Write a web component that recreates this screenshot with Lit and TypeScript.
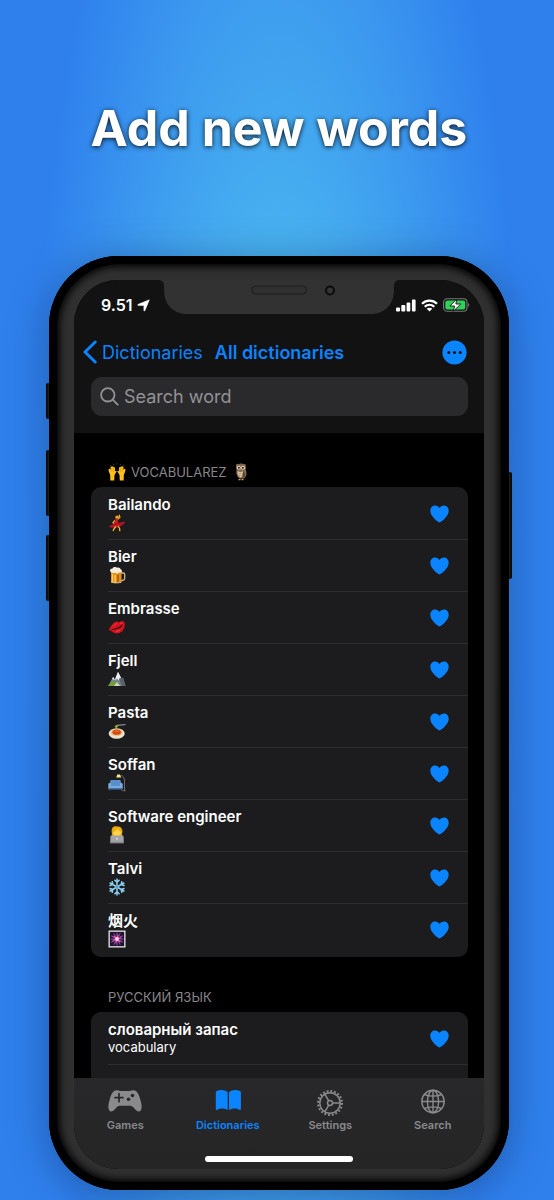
import { LitElement, html, css, svg, type TemplateResult } from "lit";
import { customElement, property } from "lit/decorators.js";
import { classMap } from "lit/directives/class-map.js";

interface Word {
  term: string;
  emoji?: string;
  meaning?: string;
}

const emojis: Record<string, TemplateResult> = {
  hands: svg`
    <g fill="#fcc21b"><path d="M1 9c-.6-1.600-.6-3 .1-3.200s1 .6 1.400 1.300L2.600 4c0-.9 1.200-.9 1.300 0l.5-.6c.4-.5 1 0 1 .6L6 4.300c.6-.4 1 0 1 .8l-.1 3.300.7-.6c.6-.5 1.200.2.900.9L6.500 12l-.3 5.500H2.300L2.200 12z"/>
    <path d="M17 9c.6-1.600.6-3-.1-3.200s-1 .6-1.400 1.300L15.400 4c0-.9-1.200-.9-1.300 0l-.5-.6c-.4-.5-1 0-1 .6l-.6.300c-.6-.4-1 0-1 .8l.1 3.300-.7-.6c-.6-.5-1.200.2-.9.900L11.500 12l.3 5.500h3.900l.1-5.500z"/></g>
    <path d="M2 2l.6.800M5.500.8l.2 1M9 .4v1M12.500.8l-.2 1M16 2l-.6.800" stroke="#6d7075" stroke-width=".7"/>
    <path d="M3.800 5v4M5.400 5v4M14.200 5v4M12.600 5v4" stroke="#d9930c" stroke-width=".5"/>`,
  owl: svg`
    <path d="M4 3c0-2 1-2.600 2-1.800 2-.8 4-.8 6 0 1.200-.8 2 0 1.700 1.800.5 2 .2 3 0 4 1.500 3 1 6.500-1.700 8.500H7.500C4.500 13.500 3.800 9.500 4.600 7 4 5.500 4 4.500 4 3z" fill="#856850"/>
    <path d="M5.500 8c2 1.500 4 1.300 5.500.3 0 3-.4 5-2.500 6.500C6.500 13.500 5 11 5.500 8z" fill="#d5c2a7"/>
    <path d="M11.500 8c2 2 1.800 5 .3 7.500C10.300 13 10.500 10 11.500 8z" fill="#5a4332"/>
    <circle cx="6.800" cy="4.700" r="1.900" fill="#eee0c8"/><circle cx="11" cy="4.700" r="1.900" fill="#eee0c8"/>
    <circle cx="6.900" cy="4.700" r="1" fill="#1f1712"/><circle cx="10.900" cy="4.700" r="1" fill="#1f1712"/>
    <path d="M8.300 5.500h1.200l-.6 1.800z" fill="#e0ac48"/><path d="M6.500 16h2v1.300h-2zM9.500 16h2v1.300h-2z" fill="#d8a048"/>
    <path d="M6.500 10.200l1 .7 1-.7 1 .7M6.700 12l1 .7 1-.7" fill="none" stroke="#8d6e52" stroke-width=".5"/>`,
  dancer: svg`
    <circle cx="9" cy="3" r="1.800" fill="#f6b81e"/><path d="M7.300 3C7 1 9.500.3 10.500 1.800L8.500 2z" fill="#3b2417"/>
    <path d="M9.500 5.500 12 3.200 11 .8M7.500 6 5 8.500l1.500 1.500" fill="none" stroke="#f6b81e" stroke-width="1.200"/>
    <path d="M7.200 4.800h3l-.2 4c2.500.5 5-1.800 7-1-1 2.500-3 4.200-6 4.500l-2 1.500c-3-1-6.500.5-8-1.300 2-1.700 4-1.500 5.500-3.700z" fill="#c9162b"/>
    <path d="M3 12c2-1 4-1 6-2.500M9.500 9.500c2 1 4.500.5 6-.6" stroke="#80101f" stroke-width=".7" fill="none"/>
    <path d="M7.800 12.500 6 14.800 5 17M10 12l1.600 2.500.2 2.800" fill="none" stroke="#f6b81e" stroke-width="1.300"/>`,
  beer: svg`
    <path d="M13 7h2.400c1 0 1.300.6 1.300 1.300v3.900c0 1.800-1.500 2.300-3.700 2.300" fill="none" stroke="#c9b594" stroke-width="1.300"/>
    <path d="M3 5h10.500v11c0 1.400-10.500 1.400-10.500 0z" fill="#e58f16"/><path d="M4.500 8v8M7.200 9v8" stroke="#f7ca50" stroke-width="1.400"/><path d="M10 8.500v8" stroke="#a95a13" stroke-width="1.600"/>
    <path d="M2.300 5.400C1.500 3.600 3 2.400 4.500 2.500 5.500.7 8 .8 9 1.800c1.800-.6 3.300.3 3.500 1.500 1.600.3 1.800 2 1 3-1.200 1-2 0-3 .3-.6 1.900-2.200 1.700-2.600.2-2 .5-4.600.5-5.600-1.400z" fill="#f5eedd"/>
    <path d="M3 16c2 1.200 8.500 1.200 10.500 0" fill="none" stroke="#d7c8aa" stroke-width=".9"/>`,
  kiss: svg`
    <path d="M.8 12C2.500 8 5.500 4 9 3.200c.8.500 1.200 1.100 1.700 1.300 1.500-1 3.800-1.700 5-1 1.500 1.200 1.600 5-.4 8.200-2 3-5.300 4-7.800 3.600C5 14.800 4 12.900.8 12z" fill="#d4141f"/>
    <path d="M2.500 11.600c2.500-.8 5-.6 7-2 2-.8 3.500-2.600 5.800-3.400-1.600 2.300-3 4-5.300 4.600-2.400.8-4.600 1.200-7.500.8z" fill="#33090b"/>
    <path d="M5 8.500 8.500 5M12 5.500l2.500-.8M8 13.500l4-1.300" stroke="#f0484d" stroke-width=".8"/>`,
  mountain: svg`
    <path d="M.3 16 5 7l2 2.500L10 2l3.500 7L15 7.500l2.700 8.500z" fill="#77828a"/><path d="M7.200 8.800 10 1.800l3.500 6.800-1.800-.8-1 3-1.600-2.500-1.300 2z" fill="#eef2f3"/>
    <path d="M4 9l1.200-2.300L7 10l-1.500-.3z" fill="#d9e0e2"/><path d="M0 16 4.200 10l2 3 2-2 3 3 .5 2z" fill="#6f9c3c"/><path d="M6 16l3-4 3 4z" fill="#d7cfc0"/>
    <path d="M11 9l3 7h3.600L15 7.700z" fill="#56616a"/>`,
  pasta: svg`
    <ellipse cx="8.700" cy="11.500" rx="8" ry="5.200" fill="#ece4d2"/><ellipse cx="8.700" cy="10.700" rx="6.400" ry="3.500" fill="#e0d2b2"/>
    <ellipse cx="8.700" cy="10.300" rx="5.200" ry="3.200" fill="#efb947"/><ellipse cx="8.700" cy="10.200" rx="4.200" ry="2.600" fill="#d8481c"/>
    <path d="M6.500 9.500c1.500-1.500 3 .7 4.500-.7" stroke="#f1832e" fill="none"/><path d="M7.500 5.800C6 4.500 7 3 8.500 3.300c.2-1 1.700-1 2 .1L9 6z" fill="#84ad36"/>
    <path d="M10 3.300 17.500 2.600" stroke="#a0a7ad" stroke-width="1"/>`,
  sofa: svg`
    <path d="M2 8c0-1.500 1-2 2-2h7c1 0 2 .5 2 2v4H2z" fill="#5b8fcb"/><path d="M.3 10.200c0-1.500 2.400-1.500 2.700 0V12h9v-1.800c.3-1.500 2.500-1.500 2.700 0V15H.3z" fill="#79acdf"/>
    <path d="M.8 14h13.500v1.600H.8z" fill="#416f9f"/><path d="M1.500 15.500v1M13.500 15.500v1" stroke="#82552f"/>
    <path d="M11 2.200c4-2 5.500 2 5.500 5v9.300M14.500 16.700h3.300" fill="none" stroke="#777b72" stroke-width=".9"/><path d="M8.200 3.500 9.300.6h2.500l1.400 2.900z" fill="#f9e68c"/>`,
  coder: svg`
    <path d="M4 8C2.500 1.500 6-.2 9 .5c4-.7 6.500 2.800 5 7.500l.3 3H3.800z" fill="#e8a60d"/><circle cx="9" cy="6.300" r="4" fill="#ffd34d"/>
    <path d="M5 6c2-.5 4-2 4.500-3.500 1 2 2.300 2.900 3.600 3.300V3L9 1 5.300 3z" fill="#f0ad10"/><path d="M2.500 12c1.500-2 11.500-2 13 0v5h-13z" fill="#6f8290"/>
    <path d="M3.300 9.600h11.400c.5 0 .8.300.8.800V17h-13v-6.600c0-.5.300-.8.800-.8z" fill="#a4a5a8"/><path d="M2.200 15.800h13.600v1.600H2.200z" fill="#85868a"/><circle cx="9" cy="12.700" r=".9" fill="#e8e8e9"/>`,
  snow: svg`
    <g fill="none" stroke="#8fd0f2" stroke-width="1.500" stroke-linecap="round">
      ${[0, 60, 120, 180, 240, 300].map(
        (a) => svg`<g transform=${`rotate(${a} 9 9)`}><path d="M9 9V1M9 4.200 6.800 2.200M9 4.200l2.200-2"/></g>`,
      )}
    </g><circle cx="9" cy="9" r="1.300" fill="#4a9fd0"/>`,
  fireworks: svg`
    <path d="M.5.500h17v17H.5z" fill="#e9e6ea"/><path d="M1.800 1.800h14.400v14.400H1.800z" fill="#1d1530"/>
    <g stroke-width=".9" stroke="#b24cc0">
      ${[0, 30, 60, 90, 120, 150].map((a) => svg`<path transform=${`rotate(${a} 9 9)`} d="M9 2.500v13"/>`)}
    </g>
    <g stroke-width="1" stroke="#f0629d">
      ${[15, 75, 135].map((a) => svg`<path transform=${`rotate(${a} 9 9)`} d="M9 4.500v9"/>`)}
    </g><circle cx="9" cy="9" r="1.900" fill="#ffd9ec"/>`,
};

const emoji = (name: string) =>
  html`<svg class="emoji" viewBox="0 0 18 18" role="img" aria-label=${name}>${emojis[name]}</svg>`;

const tabIcons: Record<string, TemplateResult> = {
  Games: svg`
    <path fill="currentColor" fill-rule="evenodd" d="M8.500 1.500C11 .6 12.500 2 14 2h8c1.500 0 3-1.400 5.500-.5 3 .6 4.500 4.500 5.800 9 1.200 4 2 8 .7 10.400-1 1.900-3.500 1.900-5 .4-2-1.900-3.300-4.500-5.500-4.500h-11c-2.200 0-3.500 2.600-5.500 4.500-1.500 1.500-4 1.500-5-.4-1.300-2.400-.5-6.400.7-10.400C4 6 5.500 2.100 8.500 1.500z"/>
    <path d="M8 8.700h8M12 4.700v8" stroke="#28282a" stroke-width="1.700" stroke-linecap="round"/>
    <circle cx="25.500" cy="6.500" r="1.800" fill="#28282a"/><circle cx="21.500" cy="10.300" r="1.800" fill="#28282a"/>`,
  Dictionaries: svg`
    <path fill="currentColor" d="M17.700 3.300v18c-2.500-2.200-7.800-2.200-10.300-.5-.8.500-1.600.3-1.600-.7V3.500c0-.7.300-1 1-1.400 3-1.700 8-1.600 10.900 1.200zM19 3.300v18c2.500-2.200 7.800-2.200 10.300-.5.800.5 1.600.3 1.600-.7V3.500c0-.7-.3-1-1-1.400-3-1.700-8-1.600-10.900 1.200z"/>`,
  Settings: svg`
    <g fill="none" stroke="currentColor" stroke-width="1.500">
      <circle cx="18" cy="14" r="10.200"/><circle cx="18" cy="14" r="12" stroke-width="2" stroke-dasharray="1.890 1.880"/>
      <circle cx="18" cy="14" r="2.500"/><path d="M20.500 14h7.700M16.800 11.800l-4-6.600M16.800 16.200l-4 6.600"/>
    </g>`,
  Search: svg`
    <g fill="none" stroke="currentColor" stroke-width="1.400">
      <circle cx="18" cy="12.500" r="11.200"/><ellipse cx="18" cy="12.500" rx="5.600" ry="11.200"/>
      <path d="M18 1.300v22.400M6.800 12.500h22.400M9.500 5.500c4.500 2.200 12.500 2.200 17 0M9.500 19.500c4.500-2.200 12.500-2.200 17 0"/>
    </g>`,
};

const baseStyles = css`
  :host {
    display: block;
  }
  a,
  button {
    color: inherit;
    font: inherit;
    text-decoration: none;
    background: none;
    border: 0;
    padding: 0;
  }
  svg {
    display: block;
    flex: none;
  }
`;

@customElement("word-section")
export class WordSection extends LitElement {
  @property() heading = "";
  @property() before = "";
  @property() after = "";
  @property({ attribute: false }) words: Word[] = [];

  static styles = [
    baseStyles,
    css`
      .heading {
        display: flex;
        align-items: center;
        gap: 5px;
        height: 18px;
        margin: 0 17px 6px;
        color: #87878b;
        font-size: 13px;
        font-weight: 400;
      }
      .emoji {
        width: 18px;
        height: 18px;
      }
      .list {
        margin: 0;
        padding: 1px 0;
        list-style: none;
        background: #1c1c1e;
        border-radius: 10px;
      }
      .row {
        display: flex;
        align-items: center;
        height: 51px;
        margin-left: 17px;
        padding-right: 19px;
        border-bottom: 1px solid #2d2d2f;
      }
      .row:last-child {
        border-color: transparent;
      }
      .text {
        flex: 1;
        min-width: 0;
      }
      .term {
        font-size: 15px;
        line-height: 18px;
        font-weight: 600;
        color: #fff;
      }
      .meaning {
        height: 18px;
        font-size: 13px;
        line-height: 16px;
        color: #fff;
      }
      .heart {
        color: #0a84ff;
      }
    `,
  ];

  render() {
    return html`
      <section>
        <h2 class="heading">
          ${this.before ? emoji(this.before) : ""}<span>${this.heading}</span>${this.after ? emoji(this.after) : ""}
        </h2>
        <ul class="list">
          ${this.words.map(
            (w) => html`
              <li class="row">
                <div class="text">
                  <div class="term">${w.term}</div>
                  <div class="meaning">${w.emoji ? emoji(w.emoji) : w.meaning}</div>
                </div>
                <button class="heart" aria-label="Favourite">
                  <svg width="19" height="18" viewBox="0 0 19 18">
                    <path
                      fill="currentColor"
                      d="M9.500 17.500C8.800 17.500.3 11.700.3 5.700.3 2.500 2.500.5 5.100.5c1.900 0 3.500 1 4.400 2.600C10.400 1.500 12 .5 13.900.5c2.600 0 4.800 2 4.800 5.200 0 6-8.500 11.800-9.200 11.800z"
                    />
                  </svg>
                </button>
              </li>
            `,
          )}
        </ul>
      </section>
    `;
  }
}

@customElement("app-root")
export class AppRoot extends LitElement {
  private vocabulary: Word[] = [
    { term: "Bailando", emoji: "dancer" },
    { term: "Bier", emoji: "beer" },
    { term: "Embrasse", emoji: "kiss" },
    { term: "Fjell", emoji: "mountain" },
    { term: "Pasta", emoji: "pasta" },
    { term: "Soffan", emoji: "sofa" },
    { term: "Software engineer", emoji: "coder" },
    { term: "Talvi", emoji: "snow" },
    { term: "烟火", emoji: "fireworks" },
  ];

  private russian: Word[] = [
    { term: "словарный запас", meaning: "vocabulary" },
    { term: "", meaning: "" },
  ];

  static styles = [
    baseStyles,
    css`
      :host {
        font-family: Inter, "Noto Sans CJK SC", sans-serif;
      }
      .page {
        box-sizing: border-box;
        display: flex;
        flex-direction: column;
        height: 100vh;
        padding: 0 45px 10px 49px;
        overflow: hidden;
        background: radial-gradient(ellipse 45% 82% at 50% 50%, #56ccf2, #2f80ed);
      }
      .title {
        margin: 0;
        padding: 98px 0;
        color: #fff;
        font-size: 50px;
        line-height: 60px;
        font-weight: 700;
        text-align: center;
        white-space: nowrap;
        text-shadow: 0 1px 5px rgba(0, 0, 0, 0.9);
      }
      .phone {
        position: relative;
        box-sizing: border-box;
        flex: 1;
        min-height: 0;
        display: flex;
        padding: 24px 25px 21px;
        border-radius: 70px;
        background: #303030;
        box-shadow:
          inset 0 0 0 8px #000,
          inset 0 0 7px 11px #050505,
          0 6px 40px rgba(0, 10, 40, 0.34);
      }
      .side {
        position: absolute;
        width: 3px;
        left: -3px;
        border-radius: 2px 0 0 2px;
        background: linear-gradient(90deg, #000, #222);
      }
      .mute {
        top: 127px;
        height: 36px;
      }
      .up {
        top: 194px;
        height: 66px;
      }
      .down {
        top: 279px;
        height: 66px;
      }
      .power {
        left: auto;
        right: -3px;
        top: 216px;
        height: 107px;
        border-radius: 0 2px 2px 0;
        background: linear-gradient(90deg, #222, #000);
      }
      .screen {
        position: relative;
        flex: 1;
        min-width: 0;
        display: flex;
        flex-direction: column;
        overflow: hidden;
        border-radius: 44px;
        background: #000;
      }
      .notch {
        position: absolute;
        top: 0;
        left: 50%;
        transform: translateX(-50%);
      }
      .top {
        background: #121213;
        padding-bottom: 17px;
      }
      .status {
        display: flex;
        align-items: center;
        height: 50px;
        padding: 0 14px 0 27px;
        color: #fff;
        font-size: 16px;
        font-weight: 600;
        gap: 5px;
      }
      .time {
        margin-right: auto;
        display: flex;
        align-items: center;
        gap: 4px;
      }
      .nav {
        display: flex;
        align-items: center;
        height: 44px;
        padding: 0 17px 0 9px;
        color: #0a84ff;
        font-size: 18px;
      }
      .back {
        display: flex;
        align-items: center;
        gap: 5px;
      }
      .all {
        margin: 0 auto 0 12px;
        font-size: 18px;
        font-weight: 600;
      }
      .search {
        display: flex;
        align-items: center;
        gap: 5px;
        height: 39px;
        margin: 3px 16px 0 17px;
        padding: 0 9px;
        border-radius: 11px;
        background: #2a2a2c;
        color: #929297;
      }
      .input {
        flex: 1;
        min-width: 0;
        padding: 0;
        border: 0;
        outline: 0;
        background: none;
        color: #fff;
        font: inherit;
        font-size: 18px;
      }
      .input::placeholder {
        color: #929297;
        opacity: 1;
      }
      .content {
        flex: 1;
        min-height: 0;
        overflow: hidden;
        display: flex;
        flex-direction: column;
        gap: 31px;
        padding: 30px 16px 0 17px;
      }
      .tabs {
        box-sizing: border-box;
        display: grid;
        grid-template-columns: repeat(4, 1fr);
        padding-top: 11px;
        height: 78px;
      }
      .bottom {
        background: linear-gradient(180deg, #28282a, #252526);
      }
      .tab {
        display: flex;
        flex-direction: column;
        align-items: center;
        gap: 1px;
        color: #8a8a8c;
        font-size: 11px;
        line-height: 14px;
        font-weight: 600;
      }
      .active {
        color: #0a84ff;
      }
      .home {
        width: 36%;
        height: 6px;
        margin: 0 auto 7px;
        border-radius: 3px;
        background: #fff;
      }
    `,
  ];

  render() {
    return html`
      <main class="page">
        <h1 class="title">Add new words</h1>
        <div class="phone">
          <span class="side mute"></span><span class="side up"></span><span class="side down"></span
          ><span class="side power"></span>
          <div class="screen">
            <header class="top">
              <div class="status">
                <span class="time"
                  >9.51
                  <svg width="13" height="13" viewBox="0 0 13 13">
                    <path fill="#fff" stroke="#fff" stroke-width=".8" stroke-linejoin="round" d="M12.200.9 7.700 11.800c-.2.400-.7.300-.7-.1V6.300H1.200c-.5 0-.6-.6-.1-.8z" />
                  </svg>
                </span>
                <svg width="20" height="13" viewBox="0 0 20 13" fill="#fff">
                  <rect x="0" y="8.500" width="4" height="4" rx="1" /><rect x="5.300" y="6" width="4" height="6.500" rx="1" />
                  <rect x="10.600" y="3.500" width="3.700" height="9" rx="1" /><rect x="15.900" y=".5" width="3.700" height="12" rx="1" />
                </svg>
                <svg width="17" height="13" viewBox="0 0 17 13" fill="none" stroke="#fff" stroke-width="2.200">
                  <path d="M1 4.700c4.300-4.200 10.700-4.200 15 0M3.700 7.700c2.800-2.600 6.800-2.600 9.600 0" />
                  <path d="M8.500 12.500 5.700 9.700c1.600-1.400 4-1.400 5.600 0z" fill="#fff" stroke="none" />
                </svg>
                <svg width="27" height="14" viewBox="0 0 27 14">
                  <rect x=".6" y=".8" width="23.400" height="12.400" rx="3.500" fill="none" stroke="#77797a" stroke-width="1.100" />
                  <rect x="2.300" y="2.500" width="20" height="9" rx="2" fill="#30d158" />
                  <path d="M25.200 5v4c1.500-.6 1.500-3.400 0-4z" fill="#77797a" />
                  <path d="M13.800 1 6.900 8h4.700L10.300 13.200 17.800 6h-4.900z" fill="#fff" stroke="#121213" stroke-width=".9" />
                </svg>
              </div>
              <nav class="nav">
                <a class="back" href="#dictionaries">
                  <svg width="14" height="24" viewBox="0 0 14 24" fill="none" stroke="currentColor" stroke-width="3" stroke-linecap="round" stroke-linejoin="round">
                    <path d="M12.200 2 2 12l10.200 10" />
                  </svg>
                  Dictionaries
                </a>
                <h2 class="all">All dictionaries</h2>
                <button class="more" aria-label="More">
                  <svg width="25" height="25" viewBox="0 0 25 25">
                    <circle cx="12.500" cy="12.500" r="12.100" fill="currentColor" />
                    <g fill="#121213"><circle cx="6.800" cy="12.500" r="1.500" /><circle cx="12.500" cy="12.500" r="1.500" /><circle cx="18.200" cy="12.500" r="1.500" /></g>
                  </svg>
                </button>
              </nav>
              <label class="search">
                <svg width="19" height="19" viewBox="0 0 19 19" fill="none" stroke="currentColor" stroke-width="1.800" stroke-linecap="round">
                  <circle cx="7.800" cy="7.800" r="6.700" /><path d="m12.700 12.700 5 5" />
                </svg>
                <input class="input" type="text" placeholder="Search word" aria-label="Search word" />
              </label>
            </header>
            <div class="content">
              <word-section heading="VOCABULAREZ" before="hands" after="owl" .words=${this.vocabulary}></word-section>
              <word-section heading="РУССКИЙ ЯЗЫК" .words=${this.russian}></word-section>
            </div>
            <footer class="bottom">
              <nav class="tabs">
                ${Object.keys(tabIcons).map(
                  (name) => html`
                    <a class=${classMap({ tab: true, active: name === "Dictionaries" })} href="#${name.toLowerCase()}">
                      <svg width="36" height="28" viewBox="0 0 36 28">${tabIcons[name]}</svg>
                      ${name}
                    </a>
                  `,
                )}
              </nav>
              <div class="home"></div>
            </footer>
            <svg class="notch" width="242" height="34" viewBox="0 0 242 34">
              <path fill="#323232" d="M0 0h242c-4 0-6 2-6 6v4c0 14-9 24-23 24H29C15 34 6 24 6 10V6c0-4-2-6-6-6z" />
              <rect x="93.500" y="6" width="55" height="8" rx="4" fill="#303030" stroke="#1c1c1c" />
              <circle cx="172" cy="10.500" r="4" fill="#343434" stroke="#0c0c0c" stroke-width="2" />
            </svg>
          </div>
        </div>
      </main>
    `;
  }
}
